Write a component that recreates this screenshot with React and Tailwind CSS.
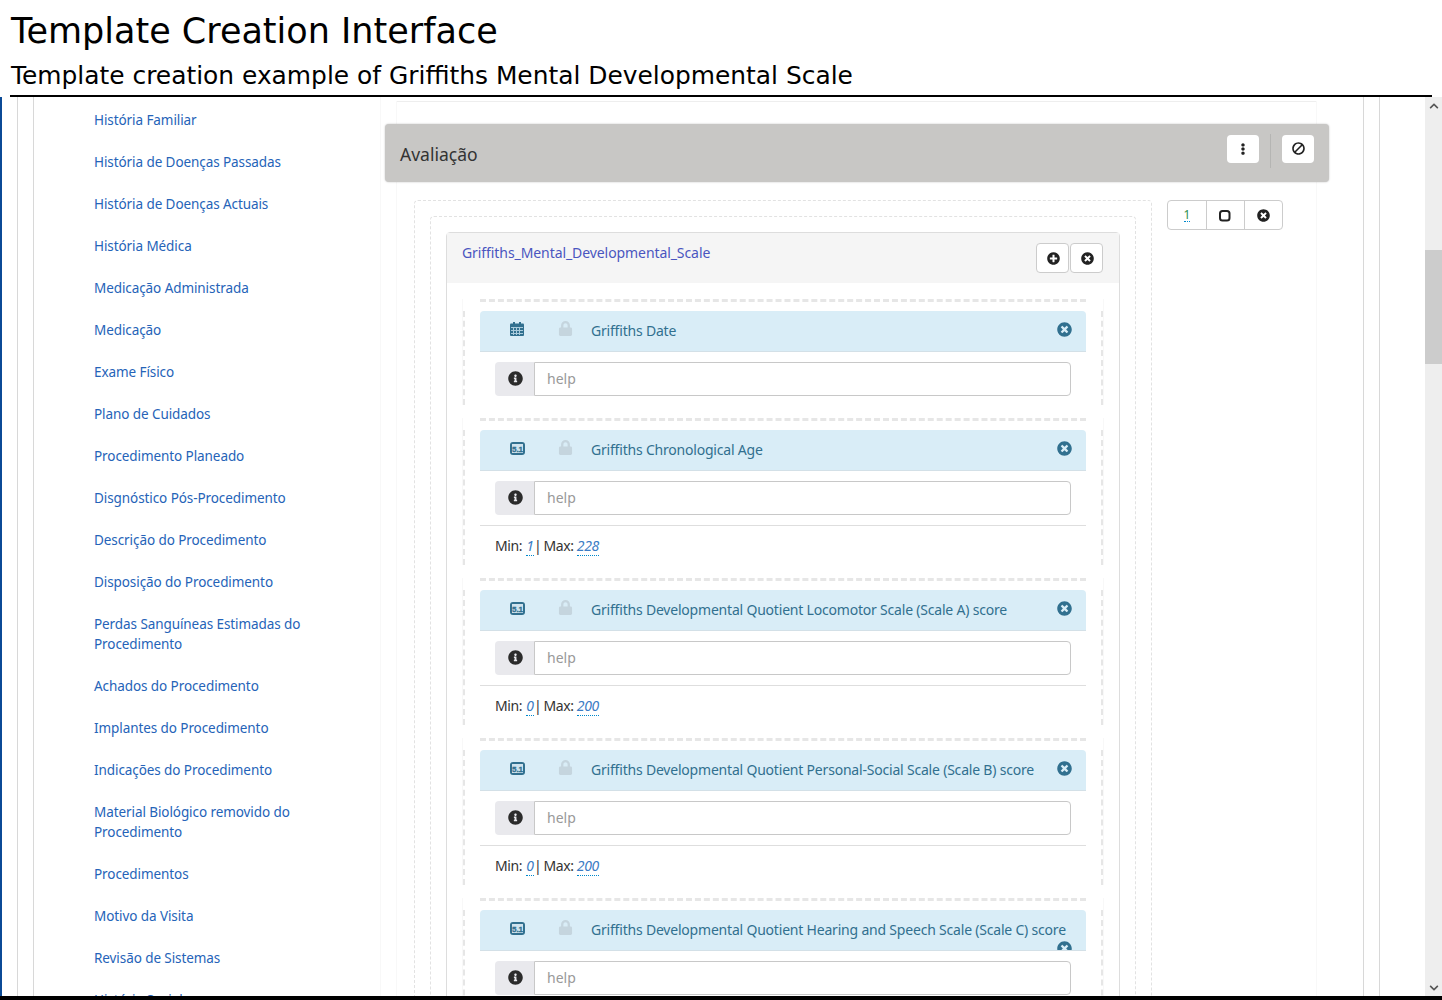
import { FaBan, FaChevronDown, FaChevronUp, FaEllipsisV, FaInfoCircle, FaLock, FaPlusCircle, FaTimesCircle } from "react-icons/fa";

const menuItems = [
  "História Familiar",
  "História de Doenças Passadas",
  "História de Doenças Actuais",
  "História Médica",
  "Medicação Administrada",
  "Medicação",
  "Exame Físico",
  "Plano de Cuidados",
  "Procedimento Planeado",
  "Disgnóstico Pós-Procedimento",
  "Descrição do Procedimento",
  "Disposição do Procedimento",
  "Perdas Sanguíneas Estimadas do Procedimento",
  "Achados do Procedimento",
  "Implantes do Procedimento",
  "Indicações do Procedimento",
  "Material Biológico removido do Procedimento",
  "Procedimentos",
  "Motivo da Visita",
  "Revisão de Sistemas",
  "História Social",
];

const fields = [
  { title: "Griffiths Date", type: "date" },
  { title: "Griffiths Chronological Age", min: "1", max: "228" },
  { title: "Griffiths Developmental Quotient Locomotor Scale (Scale A) score", min: "0", max: "200" },
  { title: "Griffiths Developmental Quotient Personal-Social Scale (Scale B) score", min: "0", max: "200" },
  { title: "Griffiths Developmental Quotient Hearing and Speech Scale (Scale C) score", min: "0", max: "200" },
];

const NumberIcon = () => (
  <svg width="15" height="13" viewBox="0 0 15 13" className="block mt-[2px]">
    <rect x="0" y="0" width="15" height="13" rx="3" fill="#31708f" />
    <rect x="2" y="2" width="11" height="9" fill="#cfe3ee" />
    <text x="7.5" y="9.7" textAnchor="middle" fontSize="8" fontWeight="700" stroke="#31708f" strokeWidth="0.3" fill="#31708f" fontFamily="Liberation Sans, sans-serif">5.1</text>
  </svg>
);

const CalendarIcon = () => (
  <svg width="14" height="14" viewBox="0 0 14 14" className="block mt-px">
    <rect x="0" y="1.5" width="14" height="12.5" rx="1" fill="#31708f" />
    <rect x="3" y="0" width="2" height="3" fill="#31708f" />
    <rect x="9" y="0" width="2" height="3" fill="#31708f" />
    <g fill="#a9cbdc">
      <rect x="1" y="5" width="12" height="1" />
      <rect x="1" y="8" width="12" height="1" />
      <rect x="1" y="11" width="12" height="1" />
      <rect x="3" y="5" width="1" height="8" />
      <rect x="6" y="5" width="1" height="8" />
      <rect x="9" y="5" width="1" height="8" />
    </g>
  </svg>
);

const SquareIcon = () => (
  <svg width="13" height="13" viewBox="0 0 13 13" className="block">
    <rect x="2" y="2" width="9.5" height="9.5" rx="2.5" fill="none" stroke="#222" strokeWidth="2" />
  </svg>
);

const Editable = ({ children, className }) => (
  <a className={`italic text-[#3b7cc4] border-b border-dotted border-[#0088cc] ${className || ""}`}>{children}</a>
);

const Field = ({ field }) => (
  <div className="border-x border-[#f8f8f8]">
    <div className="mx-[17px] h-[12px] border-t-[3px] border-dashed border-[#e6e6e6]" />
    <div className="border-x-2 border-dashed border-[#e6e6e6] px-[15px] pb-[9px]">
      <div className="h-[41px] bg-[#d9edf7] border-b border-[#d3e0e7] rounded-t pl-[30px] pr-[14px] pt-[10px] text-[#31708f] flex flex-wrap content-start overflow-hidden">
        <span className="w-[15px] h-5">
          {field.type === "date" ? <CalendarIcon /> : <NumberIcon />}
        </span>
        <FaLock size={15} className="ml-[33px] mt-[0px] text-[#c5d5de]" />
        <span className="ml-[18px] text-sm leading-5 tracking-[-0.2px]">{field.title}</span>
        <FaTimesCircle size={15} className="ml-auto mt-px" />
      </div>
      <div className="mt-[10px] mx-[15px] flex h-[34px]">
        <span className="w-[39px] bg-[#e9e9ed] rounded-l flex items-center justify-center text-[#2b2b2b] pb-[2px] pl-[2px]">
          <FaInfoCircle size={15} />
        </span>
        <input placeholder="help" className="flex-1 min-w-0 border border-[#c8c8c8] rounded-r bg-white px-[12px] text-sm outline-none placeholder:text-[#999]" />
      </div>
      {field.max && (
        <div className="mt-[10px] -mb-[9px] border-t border-[#dedede] px-[15px] pt-[10px] pb-[9px] text-sm leading-5 tracking-[-0.4px] text-[#333]">
          Min: <Editable className="ml-px">{field.min}</Editable> <span className="-ml-[3px] -mr-px">|</span> Max: <Editable>{field.max}</Editable>
        </div>
      )}
    </div>
  </div>
);

export default function App() {
  return (
    <div className="w-[1442px] h-[1000px] overflow-hidden flex flex-col bg-white font-['Noto_Sans',sans-serif]">
      <header className="mx-[10px] w-[1422px] h-[97px] border-b-2 border-black font-['DejaVu_Sans',sans-serif] text-black pl-px">
        <h1 className="text-[35px] leading-[42px] pt-[10px] box-content">Template Creation Interface</h1>
        <h2 className="text-[24.9px] leading-[30px] mt-[9px]">Template creation example of Griffiths Mental Developmental Scale</h2>
      </header>

      <div className="flex-1 min-h-0 flex border-b-4 border-black">
        <div className="flex-1 min-w-0 border-l-2 border-[#0b4a96] pl-[15px] pr-[45px] overflow-hidden">
          <div className="h-full border-x border-[#d8d8d8] px-[15px]">
            <div className="h-full border-x border-[#d8d8d8] flex">
              <ul className="w-[346px] shrink-0 pl-[60px] pt-[2px] text-[13.5px] leading-5 tracking-[-0.08px] text-[#2563b8]">
                {menuItems.map((item) => (
                  <li key={item} className="py-[11px] w-[232px]">{item}</li>
                ))}
              </ul>

              <div className="flex-1 min-w-0 border-l border-[#f8f8f8] pl-[15px] pr-[15px]">
                <div className="h-full w-[921px] border-x border-[#f8f8f8]">
                  <div className="mt-[4px] border-t border-[#eeeeee]" />
                  <div className="-ml-[12px] -mr-[13px] mt-[22px] h-[58px] bg-[#c8c7c5] rounded-sm shadow-[0_0_2px_rgba(0,0,0,0.25)] pl-[15px] pr-[15px] flex items-center">
                    <span className="text-[17.5px] text-[#333] mt-[2px]">Avaliação</span>
                    <button className="ml-auto w-[32px] h-[28px] bg-white rounded-sm flex items-center justify-center text-[#222] mb-[9px]">
                      <FaEllipsisV size={12} />
                    </button>
                    <span className="ml-[11px] w-px h-[34px] bg-[#b5b5b3] mb-[4px]" />
                    <button className="ml-[11px] w-[32px] h-[28px] bg-white rounded-sm flex items-center justify-center text-[#222] mb-[9px]">
                      <FaBan size={13} className="-scale-x-100" />
                    </button>
                  </div>

                  <div className="flex items-start mt-[18px] pl-[17px]">
                    <div className="w-[738px] shrink-0 border border-dashed border-[#e2e2e2] rounded p-[15px] pb-0">
                      <div className="border border-dashed border-[#e2e2e2] rounded p-[15px] pb-0">
                        <div className="border border-[#dddddd] rounded-t">
                          <div className="h-[50px] bg-[#f5f5f5] pl-[15px] pr-[16px] flex">
                            <a className="text-sm leading-5 pt-[10px] tracking-[-0.08px] text-[#4a55c0]">Griffiths_Mental_Developmental_Scale</a>
                            <div className="ml-auto mt-[10px] flex gap-px">
                              <button className="w-[33px] h-[30px] bg-white border border-[#cccccc] rounded flex items-center justify-center text-[#222] pl-px">
                                <FaPlusCircle size={13} />
                              </button>
                              <button className="w-[33px] h-[30px] bg-white border border-[#cccccc] rounded flex items-center justify-center text-[#222] pl-px">
                                <FaTimesCircle size={13} />
                              </button>
                            </div>
                          </div>
                          <div className="px-[15px] pt-[16px] flex flex-col gap-[13px]">
                            {fields.map((field) => (
                              <Field key={field.title} field={field} />
                            ))}
                          </div>
                        </div>
                      </div>
                    </div>

                    <div className="ml-[15px] w-[116px] h-[30px] border border-[#cccccc] rounded flex text-[#222]">
                      <span className="w-[39px] border-r border-[#cccccc] flex items-center justify-center text-[12px] text-[#2f8f4f]">
                        <span className="border-b border-dotted border-[#0088cc] leading-[12px]">1</span>
                      </span>
                      <span className="w-[38px] border-r border-[#cccccc] flex items-center justify-center pr-[2px]"><SquareIcon /></span>
                      <span className="flex-1 flex items-center justify-center"><FaTimesCircle size={13} /></span>
                    </div>
                  </div>
                </div>
              </div>
            </div>
          </div>
        </div>

        <div className="w-[17px] shrink-0 bg-[#eeeeee] flex flex-col text-[#555]">
          <div className="h-[17px] flex items-center justify-center"><FaChevronUp size={10} /></div>
          <div className="h-[136px]" />
          <div className="h-[114px] bg-[#cccccc]" />
          <div className="flex-1" />
          <div className="h-[17px] flex items-center justify-center"><FaChevronDown size={10} /></div>
        </div>
      </div>
    </div>
  );
}
